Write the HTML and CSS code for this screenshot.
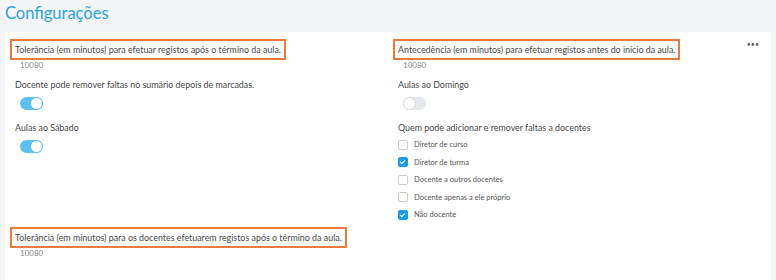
FILE: index.html
```html
<!DOCTYPE html>
<html lang="pt">
<head>
<meta charset="utf-8" />
<title>Configurações</title>
<link rel="stylesheet" href="styles.css">
</head>
<body>

<h1 class="page-title">Configurações</h1>

<div class="card">
  <span class="more">&bull;&bull;&bull;</span>

  <div class="settings">
    <div class="field">
      <div class="label boxed">Tolerância (em minutos) para efetuar registos após o término da aula.</div>
      <div class="value">10080</div>
    </div>
    <div class="field">
      <div class="label boxed">Antecedência (em minutos) para efetuar registos antes do inicio da aula.</div>
      <div class="value">10080</div>
    </div>

    <div class="field toggle-field">
      <div class="label">Docente pode remover faltas no sumário depois de marcadas.</div>
      <span class="toggle on"></span>
    </div>
    <div class="field toggle-field">
      <div class="label">Aulas ao Domingo</div>
      <span class="toggle"></span>
    </div>

    <div class="field toggle-field">
      <div class="label">Aulas ao Sábado</div>
      <span class="toggle on"></span>
    </div>
    <div class="field checks-field">
      <div class="label">Quem pode adicionar e remover faltas a docentes</div>
      <ul class="checks">
        <li><span class="check"></span>Diretor de curso</li>
        <li><span class="check on"></span>Diretor de turma</li>
        <li><span class="check"></span>Docente a outros docentes</li>
        <li><span class="check"></span>Docente apenas a ele próprio</li>
        <li><span class="check on"></span>Não docente</li>
      </ul>
    </div>

    <div class="field">
      <div class="label boxed">Tolerância (em minutos) para os docentes efetuarem registos após o término da aula.</div>
      <div class="value">10080</div>
    </div>
  </div>
</div>

</body>
</html>
```

FILE: styles.css
```css
body {
  margin: 0;
  background-color: #f3f5f7;
  font-family: Lato, "Open Sans", sans-serif;
  color: #484848;
}

.page-title {
  margin: 0;
  padding: 2px 5px 0;
  height: 30px;
  font-size: 16.5px;
  line-height: 22px;
  font-weight: 400;
  color: #2ba3dc;
}

.card {
  position: relative;
  margin: 0 5px;
  min-height: 248px;
  padding: 5px 5px 0;
  background-color: #fff;
}

.more {
  position: absolute;
  top: 8px;
  right: 12px;
  font-size: 7px;
  color: #666;
}

.settings {
  display: grid;
  grid-template-columns: 383px 1fr;
  align-items: start;
}

.label {
  font-size: 8.9px;
  line-height: 14px;
  padding-left: 5px;
}

.label.boxed {
  display: inline-block;
  padding: 2px 3px;
  line-height: 13px;
  border: 2px solid #ec7a3c;
}

.value {
  padding-left: 10px;
  font-size: 8px;
  line-height: 11px;
  color: #888;
}

.field { margin-bottom: 7px; }
.toggle-field { margin-bottom: 11px; }
.checks-field { margin-bottom: 1px; }

.toggle {
  display: block;
  position: relative;
  margin: 5px 0 0 10px;
  width: 23px;
  height: 13px;
  border-radius: 7px;
  background-color: #e5e8ec;
}

.toggle::after {
  content: "";
  position: absolute;
  top: 0;
  left: 0;
  width: 11px;
  height: 11px;
  border: 1px solid #d8dce1;
  border-radius: 50%;
  background-color: #fff;
}

.toggle.on { background-color: #5cc0f0; }
.toggle.on::after { left: 10px; border-color: #5cc0f0; }

.checks {
  list-style: none;
  margin: 1px 0 0;
  padding: 0;
}

.checks li {
  display: flex;
  align-items: center;
  height: 17.5px;
  padding-left: 5px;
  font-size: 7.5px;
  color: #555;
}

.check {
  position: relative;
  width: 8px;
  height: 8px;
  margin-right: 6px;
  border: 1px solid #c9ced4;
  border-radius: 2px;
  background-color: #fff;
}

.check.on {
  border-color: #1b9be8;
  background-color: #1b9be8;
}

.check.on::after {
  content: "";
  position: absolute;
  left: 2px;
  top: 1px;
  width: 2px;
  height: 4px;
  border: solid #fff;
  border-width: 0 1px 1px 0;
  transform: rotate(45deg);
}
```
